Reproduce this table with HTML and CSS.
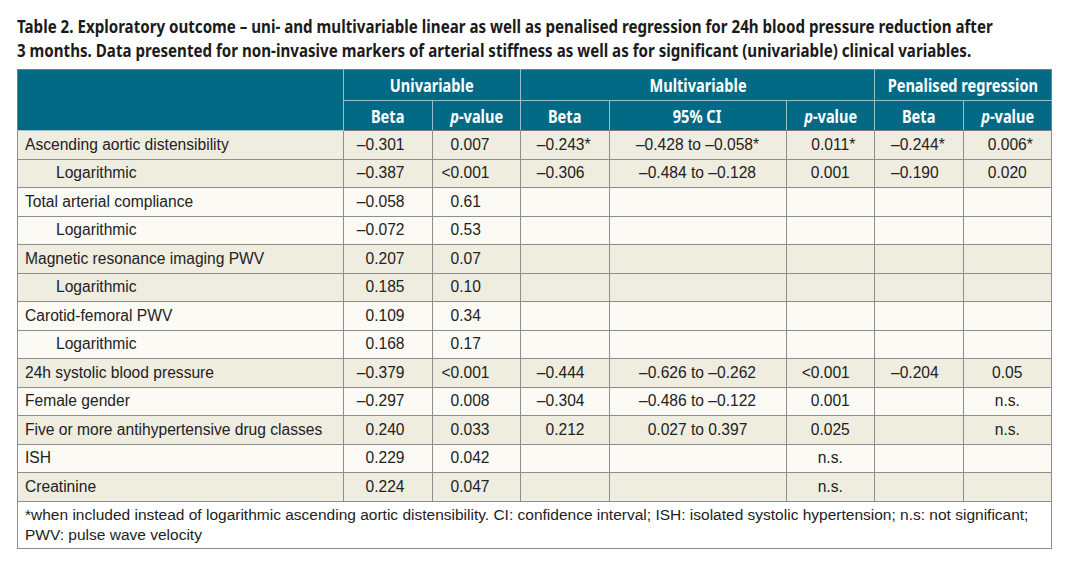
FILE: index.html
```html
<!DOCTYPE html>
<html>
<head>
<meta charset="utf-8">
<link rel="stylesheet" href="styles.css">
</head>
<body>
<div class="page">
  <h1 class="title">Table 2. Exploratory outcome – uni- and multivariable linear as well as penalised regression for 24h blood pressure reduction after<br>3 months. Data presented for non-invasive markers of arterial stiffness as well as for significant (univariable) clinical variables.</h1>
  <table class="data">
    <colgroup>
      <col class="c-label"><col class="c-n"><col class="c-n"><col class="c-n"><col class="c-ci"><col class="c-n"><col class="c-n"><col class="c-n">
    </colgroup>
    <thead>
      <tr class="h1">
        <th rowspan="2"></th>
        <th colspan="2"><span class="sq">Univariable</span></th>
        <th colspan="3"><span class="sq">Multivariable</span></th>
        <th colspan="2"><span class="sq">Penalised regression</span></th>
      </tr>
      <tr class="h2">
        <th><span class="sq">Beta</span></th><th><span class="sq"><i>p</i>-value</span></th>
        <th><span class="sq">Beta</span></th><th><span class="sq">95% CI</span></th><th><span class="sq"><i>p</i>-value</span></th>
        <th><span class="sq">Beta</span></th><th><span class="sq"><i>p</i>-value</span></th>
      </tr>
    </thead>
    <tbody>
      <tr class="tan">
        <td class="lbl">Ascending aortic distensibility</td>
        <td class="ub">–0.301</td><td class="up">0.007</td>
        <td class="mb">–0.243<span class="ha">*</span></td><td class="ci">–0.428 to –0.058*</td><td class="mp">0.011<span class="ha">*</span></td>
        <td class="pb">–0.244*</td><td class="pp">0.006<span class="ha">*</span></td>
      </tr>
      <tr class="tan">
        <td class="lbl sub">Logarithmic</td>
        <td class="ub">–0.387</td><td class="up"><span class="hl">&lt;</span>0.001</td>
        <td class="mb">–0.306</td><td class="ci">–0.484 to –0.128</td><td class="mp">0.001</td>
        <td class="pb">–0.190</td><td class="pp">0.020</td>
      </tr>
      <tr class="wht">
        <td class="lbl">Total arterial compliance</td>
        <td class="ub">–0.058</td><td class="up">0.61</td>
        <td></td><td></td><td></td><td></td><td></td>
      </tr>
      <tr class="wht">
        <td class="lbl sub">Logarithmic</td>
        <td class="ub">–0.072</td><td class="up">0.53</td>
        <td></td><td></td><td></td><td></td><td></td>
      </tr>
      <tr class="tan">
        <td class="lbl">Magnetic resonance imaging PWV</td>
        <td class="ub">0.207</td><td class="up">0.07</td>
        <td></td><td></td><td></td><td></td><td></td>
      </tr>
      <tr class="tan">
        <td class="lbl sub">Logarithmic</td>
        <td class="ub">0.185</td><td class="up">0.10</td>
        <td></td><td></td><td></td><td></td><td></td>
      </tr>
      <tr class="wht">
        <td class="lbl">Carotid-femoral PWV</td>
        <td class="ub">0.109</td><td class="up">0.34</td>
        <td></td><td></td><td></td><td></td><td></td>
      </tr>
      <tr class="wht">
        <td class="lbl sub">Logarithmic</td>
        <td class="ub">0.168</td><td class="up">0.17</td>
        <td></td><td></td><td></td><td></td><td></td>
      </tr>
      <tr class="tan">
        <td class="lbl">24h systolic blood pressure</td>
        <td class="ub">–0.379</td><td class="up"><span class="hl">&lt;</span>0.001</td>
        <td class="mb">–0.444</td><td class="ci">–0.626 to –0.262</td><td class="mp"><span class="hl">&lt;</span>0.001</td>
        <td class="pb">–0.204</td><td class="pp">0.05</td>
      </tr>
      <tr class="wht">
        <td class="lbl">Female gender</td>
        <td class="ub">–0.297</td><td class="up">0.008</td>
        <td class="mb">–0.304</td><td class="ci">–0.486 to –0.122</td><td class="mp">0.001</td>
        <td></td><td class="pp">n.s.</td>
      </tr>
      <tr class="tan">
        <td class="lbl">Five or more antihypertensive drug classes</td>
        <td class="ub">0.240</td><td class="up">0.033</td>
        <td class="mb">0.212</td><td class="ci">0.027 to 0.397</td><td class="mp">0.025</td>
        <td></td><td class="pp">n.s.</td>
      </tr>
      <tr class="wht">
        <td class="lbl">ISH</td>
        <td class="ub">0.229</td><td class="up">0.042</td>
        <td></td><td></td><td class="mp">n.s.</td>
        <td></td><td></td>
      </tr>
      <tr class="tan">
        <td class="lbl">Creatinine</td>
        <td class="ub">0.224</td><td class="up">0.047</td>
        <td></td><td></td><td class="mp">n.s.</td>
        <td></td><td></td>
      </tr>
    </tbody>
    <tfoot>
      <tr>
        <td colspan="8" class="note">*when included instead of logarithmic ascending aortic distensibility. CI: confidence interval; ISH: isolated systolic hypertension; n.s: not significant; PWV: pulse wave velocity</td>
      </tr>
    </tfoot>
  </table>
</div>
</body>
</html>
```

FILE: styles.css
```css
html, body {
  margin: 0;
  padding: 0;
  background: #ffffff;
  overflow: hidden;
}

.page {
  padding: 14px 18px 0 17px;
  width: 1034px;
}

.title {
  margin: 0 0 7px 0;
  width: 1034px;
  font-family: "Noto Sans", "DejaVu Sans Condensed", sans-serif;
  font-stretch: condensed;
  font-weight: bold;
  font-size: 18px;
  line-height: 24px;
  white-space: nowrap;
  color: #1b1b1b;
  transform: scaleX(0.84);
  transform-origin: left top;
}

.data {
  border-collapse: collapse;
  table-layout: fixed;
  width: 1034px;
  font-family: "Liberation Sans", Arial, sans-serif;
  font-size: 15.6px;
  color: #222222;
  border: 1px solid #7d7d7d;
}

.c-label { width: 326px; }
.c-n { width: 88.5px; }
.c-ci { width: 177px; }

.data th {
  background: #036a86;
  color: #ffffff;
  font-family: "Noto Sans", "DejaVu Sans Condensed", sans-serif;
  font-stretch: condensed;
  font-weight: bold;
  font-size: 18px;
  text-align: center;
  white-space: nowrap;
  border: 1px solid #9dbfcc;
  padding: 0;
}

.sq {
  display: inline-block;
  margin: 0 -20px;
  transform: scaleX(0.81);
}

.data thead tr:first-child th {
  border-top-color: #7d7d7d;
}
.data thead th:first-child {
  border-left-color: #7d7d7d;
}
.data thead th:last-child {
  border-right-color: #7d7d7d;
}

.data th i {
  font-style: italic;
}

.h1 { height: 31px; }
.h2 { height: 30px; }

.data td {
  border: 1px solid #8e8e8e;
  padding: 0;
  height: 27.5px;
  white-space: nowrap;
  text-align: center;
}

.data thead tr:last-child th {
  border-bottom-color: #7d7d7d;
}

tr.tan td { background: #efece0; }
tr.wht td { background: #fbfaf5; }

.data td.lbl {
  text-align: left;
  padding-left: 7px;
}
.data td.sub {
  padding-left: 38px;
}

.data td.ub {
  text-align: right;
  padding-right: 27px;
}
.data td.up {
  text-align: left;
  padding-left: 18px;
}
.data td.mb {
  text-align: right;
  padding-right: 24px;
}
.data td.pb {
  text-align: left;
  padding-left: 16px;
}

.ha {
  display: inline-block;
  width: 0;
}
.hl {
  margin-left: -0.584em;
}

.data td.note {
  background: #ffffff;
  text-align: left;
  white-space: normal;
  font-size: 15.5px;
  line-height: 20px;
  padding: 3px 7px 3px 7px;
  height: auto;
  color: #222222;
}
```
